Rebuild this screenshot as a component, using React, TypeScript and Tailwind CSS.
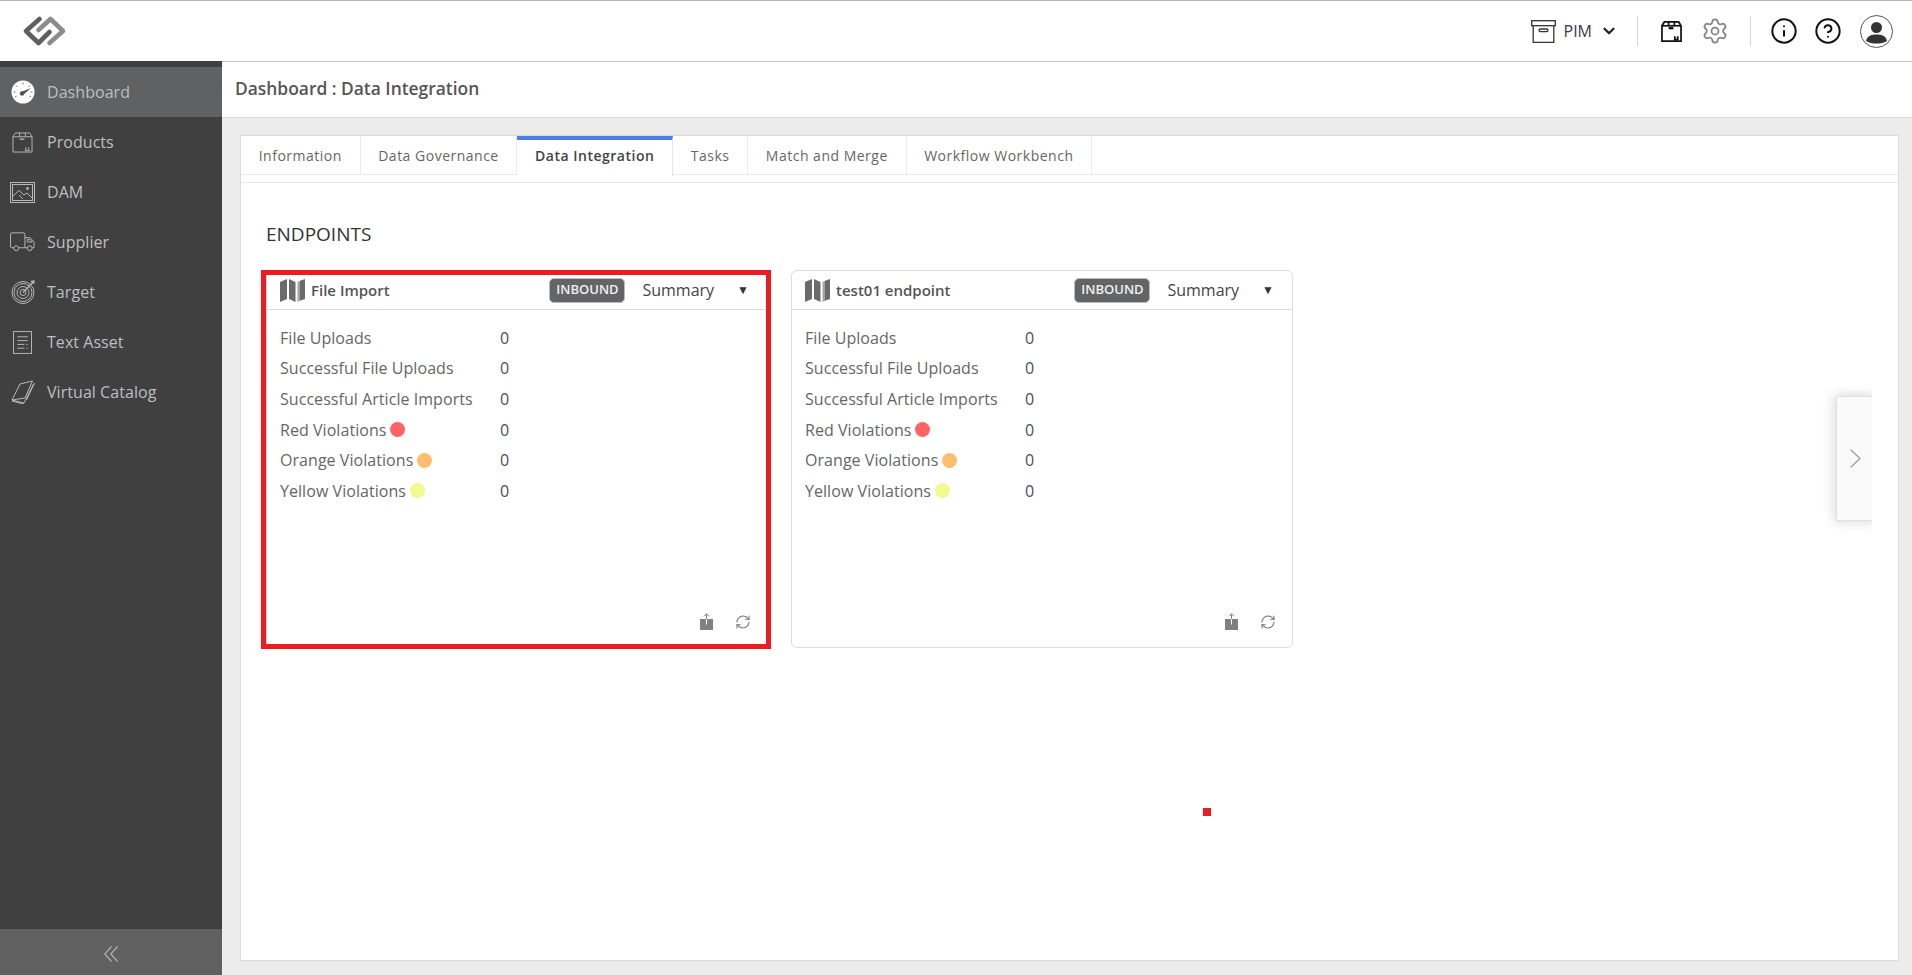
import { ChevronDown, CircleHelp, Info, RefreshCw, Settings } from "lucide-react";
import type { ReactNode } from "react";

function Logo() {
  return (
    <svg viewBox="0 0 46 32" className="w-[47px] h-[32px]" fill="none" strokeLinejoin="round" strokeLinecap="round" strokeWidth="4.6">
      <path d="M28 28 L41.5 16 L29 4 L17 15" stroke="#8c8c8c" />
      <path d="M18 4 L4.5 16 L17 28 L28 17" stroke="#5f5f5f" />
    </svg>
  );
}

function GaugeIcon() {
  return (
    <svg viewBox="0 0 24 24" className="w-6 h-6">
      <circle cx="12" cy="12" r="11.5" fill="#fff" />
      <path d="M10 12 L20 8 L12 15 Z" fill="#555" />
      <circle cx="11" cy="13.5" r="2.2" fill="#555" />
      <g stroke="#777" strokeWidth="1">
        <path d="M12 2.5v2M5 5.5l1.4 1.4M2.5 12h2M19.5 12h2M19 5.5l-1.4 1.4M4 17l1.6-.8M20 17l-1.6-.8" />
      </g>
    </svg>
  );
}

function BoxIcon({ className = "", color = "#b8b8b8", width = 1 }: { className?: string; color?: string; width?: number }) {
  return (
    <svg viewBox="0 0 22 22" className={className} fill="none" stroke={color} strokeWidth={width}>
      <path d="M1 5 L3.5 1 H18.5 L21 5 V21 H1 Z" />
      <path d="M1 5 H21" />
      <path d="M8 1 V5 M14 1 V5" />
      <path d="M8 7.5 H13" strokeWidth={width * 1.4} />
      <path d="M14.5 16v3M17.5 16v3M13.5 19.5h5" />
    </svg>
  );
}

function ImageIcon() {
  return (
    <svg viewBox="0 0 25 21" className="w-[25px] h-[21px]" fill="none" stroke="#b8b8b8" strokeWidth="1">
      <rect x="0.5" y="0.5" width="24" height="20" />
      <rect x="2.5" y="2.5" width="20" height="16" />
      <path d="M3 14 L9 8.5 L14 13 L17 11 L22 16" />
      <path d="M9 13 L13 17" />
      <circle cx="17.5" cy="6.5" r="1" fill="#b8b8b8" />
    </svg>
  );
}

function TruckIcon() {
  return (
    <svg viewBox="0 0 26 20" className="w-[26px] h-[20px]" fill="none" stroke="#b8b8b8" strokeWidth="1">
      <path d="M4 16 H2 A1.5 1.5 0 0 1 0.5 14.5 V2 A1.5 1.5 0 0 1 2 0.5 H14 A1.5 1.5 0 0 1 15.5 2 V16 H9" />
      <path d="M15.5 5.5 H21 L25 10 V16 H23" />
      <path d="M15.5 16 H18" />
      <path d="M18 7.5 H21 L23 10 H18 Z" />
      <circle cx="6.5" cy="16.5" r="2.5" />
      <circle cx="20.5" cy="16.5" r="2.5" />
    </svg>
  );
}

function TargetIcon() {
  return (
    <svg viewBox="0 0 24 24" className="w-6 h-6" fill="none" stroke="#b8b8b8" strokeWidth="1">
      <circle cx="12" cy="12.5" r="11" />
      <circle cx="12" cy="12.5" r="9" />
      <circle cx="12" cy="12.5" r="6" />
      <circle cx="12" cy="12.5" r="3" />
      <path d="M12 12.5 L22 2" strokeWidth="1.3" />
      <path d="M20 1.5 L23 1 L22.5 4" strokeWidth="1.3" />
    </svg>
  );
}

function DocIcon() {
  return (
    <svg viewBox="0 0 20 24" className="w-[19px] h-[23px]" fill="none" stroke="#b8b8b8" strokeWidth="1">
      <rect x="0.5" y="0.5" width="19" height="23" />
      <path d="M4.5 6 H15.5 M4.5 10 H15.5 M4.5 14 H12 M14 14 H15.5 M4.5 18 H12 M14 18 H15.5" />
    </svg>
  );
}

function BookIcon() {
  return (
    <svg viewBox="0 0 24 24" className="w-6 h-6" fill="none" stroke="#b8b8b8" strokeWidth="1">
      <path d="M1 20 L9 4 L21.5 1 L14 18 Z" />
      <path d="M1 20 L13 23 L22.5 4" />
      <path d="M1 21 L13 24" />
      <path d="M15.5 20 L23.5 3" />
    </svg>
  );
}

function ArchiveIcon() {
  return (
    <svg viewBox="0 0 25 23" className="w-[25px] h-[23px]" fill="none" stroke="#333" strokeWidth="1.3">
      <rect x="0.7" y="0.7" width="23.6" height="5" />
      <path d="M2.2 5.7 V22.3 H22.8 V5.7" />
      <rect x="8" y="9" width="9" height="2.6" rx="1.3" />
    </svg>
  );
}

function UserIcon() {
  return (
    <svg viewBox="0 0 33 33" className="w-[33px] h-[33px]">
      <circle cx="16.5" cy="16.5" r="16" fill="#fff" stroke="#555" strokeWidth="1" />
      <circle cx="16.5" cy="12.5" r="5.5" fill="#333" />
      <path d="M6 26 C7 20.5 12 19.5 16.5 19.5 C21 19.5 26 20.5 27 26 C24 28 20 28.5 16.5 28.5 C13 28.5 9 28 6 26 Z" fill="#333" />
    </svg>
  );
}

function MapIcon() {
  return (
    <svg viewBox="0 0 25 23" className="w-[25px] h-[23px] shrink-0">
      <path d="M0 3 L7 0 V20 L0 23 Z" fill="#6b6b6b" />
      <path d="M9 0 L15.5 3 V23 L9 20 Z" fill="#6b6b6b" />
      <path d="M17.5 3 L20 1.8 V21.8 L17.5 23 Z" fill="#a5a5a5" />
      <path d="M20 1.8 L25 0 V20 L20 21.8 Z" fill="#6b6b6b" />
    </svg>
  );
}

function ExportIcon() {
  return (
    <svg viewBox="0 0 13 17" className="w-[13px] h-[17px]" fill="none">
      <path d="M0 6 H13 V17 H0 Z" fill="#808080" />
      <path d="M6.5 6 V11.5" stroke="#fff" strokeWidth="1" />
      <path d="M6.5 6 V0.8 M4 3.3 L6.5 0.8 L9 3.3" stroke="#808080" strokeWidth="1" />
    </svg>
  );
}

const navItems: { label: string; icon: ReactNode; active?: boolean }[] = [
  { label: "Dashboard", icon: <GaugeIcon />, active: true },
  { label: "Products", icon: <BoxIcon className="w-[21px] h-[21px]" /> },
  { label: "DAM", icon: <ImageIcon /> },
  { label: "Supplier", icon: <TruckIcon /> },
  { label: "Target", icon: <TargetIcon /> },
  { label: "Text Asset", icon: <DocIcon /> },
  { label: "Virtual Catalog", icon: <BookIcon /> },
];

const tabs = ["Information", "Data Governance", "Data Integration", "Tasks", "Match and Merge", "Workflow Workbench"];

const rows: { label: string; dot?: string }[] = [
  { label: "File Uploads" },
  { label: "Successful File Uploads" },
  { label: "Successful Article Imports" },
  { label: "Red Violations", dot: "bg-[#ff6363]" },
  { label: "Orange Violations", dot: "bg-[#ffbd6f]" },
  { label: "Yellow Violations", dot: "bg-[#f1fa8c]" },
];

function EndpointCard({ title, highlighted = false }: { title: string; highlighted?: boolean }) {
  return (
    <div className="relative w-[502px] h-[378px] flex flex-col rounded-md border border-[#dcdcdc] bg-white">
      <div className="h-[39px] shrink-0 flex items-center border-b border-[#dcdcdc] pl-[13px]">
        <MapIcon />
        <span className="ml-[6px] text-[15px] font-semibold text-[#555]">{title}</span>
        <span className="ml-auto h-[25px] w-[76px] flex items-center justify-center rounded-[5px] border border-[#bbb] bg-[#636466] text-[13px] font-semibold text-[#f0f0f0]">
          INBOUND
        </span>
        <span className="ml-[17px] text-[16px] text-[#444]">Summary</span>
        <span className="ml-[23px] mr-[18px] text-[12px] text-[#333]">▼</span>
      </div>
      <div className="flex flex-col pt-[12.5px] pl-[13px]">
        {rows.map((row) => (
          <div key={row.label} className="h-[30.6px] flex items-center text-[16px] tracking-[0.05px] text-[#666]">
            <div className="w-[220px] flex items-center gap-[4px]">
              {row.label}
              {row.dot && <span className={`w-[15px] h-[15px] rounded-full ${row.dot}`} />}
            </div>
            <span className="text-[#44525c]">0</span>
          </div>
        ))}
      </div>
      <div className="mt-auto flex items-center gap-[22px] justify-end pr-[16px] pb-[17px]">
        <ExportIcon />
        <RefreshCw className="w-[16px] h-[16px] text-[#777]" strokeWidth={1.6} />
      </div>
      {highlighted && (
        <div className="absolute -left-[6px] -top-[1px] w-[510px] h-[379px] border-[5px] border-[#ed1c24] pointer-events-none" />
      )}
    </div>
  );
}

export default function App() {
  return (
    <div className="relative w-[1912px] h-[975px] overflow-hidden flex flex-col bg-white font-['Open_Sans',sans-serif]">
      <header className="h-[61px] shrink-0 border-t border-[#b5b5b5] flex items-center bg-white">
        <div className="ml-[21px]">
          <Logo />
        </div>
        <div className="ml-auto flex items-center pr-[19px]">
          <ArchiveIcon />
          <span className="ml-[8px] text-[16px] text-[#3a3a4a]">PIM</span>
          <ChevronDown className="ml-[8px] w-[18px] h-[18px] text-[#222]" strokeWidth={3} />
          <div className="ml-[19px] w-px h-[30px] bg-[#d5d5d5]" />
          <BoxIcon className="ml-[23px] w-[21px] h-[23px]" color="#111" width={1.8} />
          <Settings className="ml-[19px] w-[28px] h-[28px] text-[#858585]" strokeWidth={1.5} />
          <div className="ml-[21px] w-px h-[30px] bg-[#d5d5d5]" />
          <Info className="ml-[19px] w-[28px] h-[28px] text-[#111]" strokeWidth={1.7} />
          <CircleHelp className="ml-[16px] w-[28px] h-[28px] text-[#111]" strokeWidth={1.7} />
          <div className="ml-[18px]">
            <UserIcon />
          </div>
        </div>
      </header>

      <div className="flex flex-1 min-h-0">
        <aside className="w-[222px] shrink-0 flex flex-col bg-[#404040] pt-[6px]">
          {navItems.map((item) => (
            <div
              key={item.label}
              className={`h-[50px] flex items-center text-[16px] tracking-[0.05px] text-[#bcbfc2] ${item.active ? "bg-[#606163]" : ""}`}
            >
              <div className="w-[47px] pl-[10px] pr-[12px] flex justify-center shrink-0">{item.icon}</div>
              {item.label}
            </div>
          ))}
          <div className="mt-auto h-[46px] flex items-center justify-center bg-[#606060]">
            <svg viewBox="0 0 14 16" className="w-[14px] h-[16px] mt-[3px] text-[#b0b0b0]" fill="none" stroke="currentColor" strokeWidth="1.2">
              <path d="M7.5 0.5 L0.8 8 L7.5 15.5 M13.5 0.5 L6.8 8 L13.5 15.5" />
            </svg>
          </div>
        </aside>

        <main className="flex-1 min-w-0 flex flex-col border-t border-[#c8c8c8] bg-[#ececec]">
          <div className="h-[56px] shrink-0 flex items-center pl-[13px] pb-[2px] border-b border-[#dcdcdc] bg-white text-[17.4px] font-semibold text-[#555]">
            Dashboard : Data Integration
          </div>
          <div className="flex-1 min-h-0 pt-[17px] pl-[18px] pr-[13px] pb-[14px]">
            <div className="relative h-full flex flex-col border border-[#dcdcdc] bg-white">
              <div className="h-[39px] shrink-0 flex border-b border-[#eaeaea]">
                {tabs.map((tab) =>
                  tab === "Data Integration" ? (
                    <div
                      key={tab}
                      className="h-[40px] flex items-center px-[17.7px] pb-[5px] border-t-4 border-r border-t-[#4a7de8] border-r-[#e5e5e5] bg-white text-[14px] font-semibold tracking-[0.5px] text-[#444]"
                    >
                      {tab}
                    </div>
                  ) : (
                    <div
                      key={tab}
                      className="flex items-center px-[17.7px] border-r border-[#eaeaea] text-[14px] tracking-[0.5px] text-[#666]"
                    >
                      {tab}
                    </div>
                  ),
                )}
              </div>
              <div className="mt-[7px] border-t border-[#e8e8e8] pl-[25px] pt-[39px]">
                <h2 className="text-[19px] leading-[24px] font-medium text-[#333]">ENDPOINTS</h2>
                <div className="mt-[24px] flex gap-[23px]">
                  <EndpointCard title="File Import" highlighted />
                  <EndpointCard title="test01 endpoint" />
                </div>
              </div>
              <div className="absolute left-[1575px] top-[240px] w-[56px] h-[165px] overflow-hidden pl-[20px] pt-[20px]">
                <div className="w-[40px] h-[125px] flex items-center border border-[#e0e0e0] bg-[#fafafa] pl-[13px] shadow-[-1px_0_12px_rgba(0,0,0,0.18)]">
                  <svg viewBox="0 0 11 19" className="w-[11px] h-[19px] text-[#a0a0a0]" fill="none" stroke="currentColor" strokeWidth="1.4">
                    <path d="M0.7 0.7 L10 9.5 L0.7 18.3" />
                  </svg>
                </div>
              </div>
              <div className="absolute left-[962px] top-[672px] w-[8px] h-[8px] bg-[#ed1c24]" />
            </div>
          </div>
        </main>
      </div>
    </div>
  );
}
